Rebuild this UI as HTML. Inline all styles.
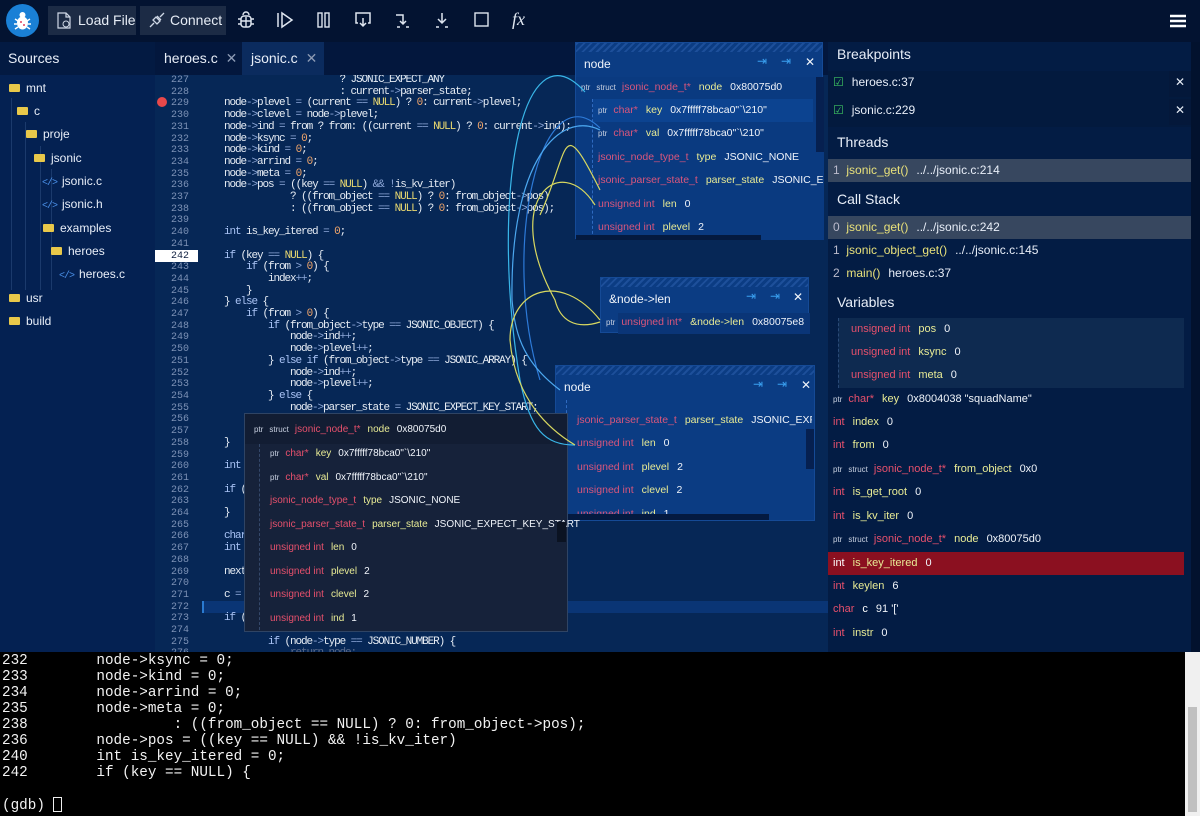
<!DOCTYPE html>
<html><head><meta charset="utf-8"><style>
*{margin:0;padding:0;box-sizing:border-box}
body{width:1200px;height:816px;overflow:hidden;background:#062452;font-family:"Liberation Sans",sans-serif;color:#e8eef8;position:relative}
.abs{position:absolute}
#top{left:0;top:0;width:1200px;height:42px;background:#031331}
.btn{position:absolute;top:6px;height:29px;background:#1c2b45;color:#e6ecf5;font-size:14px;line-height:29px;padding-left:30px}
.ic{position:absolute;top:10px}
#side{left:0;top:42px;width:155px;height:610px;background:#042152}
#side .hd{height:33px;background:#031a42;font-size:14px;line-height:33px;padding-left:8px}
.tr{position:absolute;font-size:12px;color:#e8eef8;height:16px;line-height:16px}
.fold{display:inline-block;width:11px;height:8px;background:#e8c84a;border-radius:1px;margin-right:6px;vertical-align:-0px}
.xml{color:#4a90e8;font-size:10px;margin-right:5px;font-family:"Liberation Mono",monospace;letter-spacing:-1px}
.vl{position:absolute;width:1px;background:#1b3a6c}
#tabs{left:155px;top:42px;width:673px;height:33px;background:#03173d}
.tab{position:absolute;top:0;height:33px;line-height:33px;font-size:14px;padding-left:9px}
#code{left:155px;top:75px;width:673px;height:577px;background:#062756;overflow:hidden}
.ln{position:absolute;left:0;width:34px;text-align:right;font:10px/11.7px "Liberation Mono",monospace;color:#7d92b6}
pre{position:absolute;left:47px;top:0;font:11px/11.7px "Liberation Mono",monospace;letter-spacing:-1.1px;color:#e6ecf4}
.o{color:#8da7d8}.nm{color:#f2a66a}.nu{color:#e8d870}.k{color:#a9c3f5}
#right{left:828px;top:42px;width:372px;height:610px;background:#031c44}
.h{position:absolute;left:9px;font-size:14px;color:#e8eef8}
.row{position:absolute;left:0;width:363px;height:23px;line-height:23px;font-size:11px;padding-left:5px;white-space:nowrap}
.p{font-size:8px;color:#c8d0e0;margin-right:6px}
.s{font-size:8px;color:#c8d0e0;margin-right:6px}
.t{color:#e6506c;margin-right:8px}
.n{color:#e8eb95;margin-right:8px}
.v{color:#f0f4fa}
.fn{color:#e8e07a;margin-right:8px}
#term{left:0;top:652px;width:1200px;height:164px;background:#000}
#term pre{left:2px;top:1px;font:14.3px/16px "Liberation Mono",monospace;letter-spacing:0px;color:#f2f2f2}
.pop{position:absolute;background:#0b3c83;border:1px solid #154a96}
.hatch{position:absolute;left:0;top:0;right:0;height:9px;background:repeating-linear-gradient(135deg,#1d4f9a 0 2px,#0b3c83 2px 5px)}
.pt{position:absolute;left:8px;font-size:12px;color:#f0f4fa}
.pb{position:absolute;font-size:12px;color:#3aa0f0}
.pop .row{font-size:10.5px}
.pop .t{color:#d9567c}
#tip{left:244px;top:413px;width:324px;height:219px;background:#16223a;border:1px solid #2f4464}
#tip .row{font-size:10px}
#tip .t,#tip .n{margin-right:7px}
</style></head><body>

<div id="top" class="abs">
  <div class="abs" style="left:6px;top:4px;width:33px;height:33px;border-radius:50%;background:#1a80d6"></div>
  <svg class="abs" style="left:13px;top:10px" width="19" height="21" viewBox="0 0 19 21"><ellipse cx="9.5" cy="13" rx="5.5" ry="6.5" fill="#fff"/><circle cx="9.5" cy="5" r="3" fill="#fff"/><path d="M2 9l3 2M17 9l-3 2M1 14h3M18 14h-3M2 19l3-2M17 19l-3-2" stroke="#fff" stroke-width="1.4"/><circle cx="8" cy="12" r="1" fill="#e04060"/><circle cx="11" cy="15" r="1" fill="#e04060"/></svg>
  <div class="btn" style="left:48px;width:88px">Load File</div>
  <svg class="abs" style="left:57px;top:12px" width="14" height="17" viewBox="0 0 14 17"><path d="M1 1h8l4 4v11H1z M9 1v4h4" fill="none" stroke="#cfd8e6" stroke-width="1.2"/><circle cx="9" cy="12" r="3" fill="#1c2b45" stroke="#cfd8e6"/></svg>
  <div class="btn" style="left:140px;width:86px">Connect</div>
  <svg class="abs" style="left:148px;top:11px" width="18" height="18" viewBox="0 0 18 18"><path d="M2 16l4-4M16 2l-4 4M5 9l4 4 3-3-4-4zM9 5l4 4" fill="none" stroke="#cfd8e6" stroke-width="1.3"/></svg>
  <svg class="ic" style="left:237px" width="18" height="20" viewBox="0 0 18 20"><rect x="4" y="6" width="10" height="11" rx="3" fill="none" stroke="#dfe6f0" stroke-width="1.5"/><path d="M6 5a3 3 0 0 1 6 0M1 9h3M14 9h3M1 14h3M14 14h3M9 7v10M4 11h10" stroke="#dfe6f0" stroke-width="1.4" fill="none"/></svg>
  <svg class="ic" style="left:276px" width="18" height="20" viewBox="0 0 18 20"><path d="M2 3v14M6 3l10 7-10 7z" fill="none" stroke="#dfe6f0" stroke-width="1.5"/></svg>
  <svg class="ic" style="left:316px" width="16" height="20" viewBox="0 0 16 20"><rect x="2" y="3" width="4" height="14" fill="none" stroke="#dfe6f0" stroke-width="1.4"/><rect x="9" y="3" width="4" height="14" fill="none" stroke="#dfe6f0" stroke-width="1.4"/></svg>
  <svg class="ic" style="left:354px" width="18" height="20" viewBox="0 0 18 20"><path d="M4 13H2V3h14v10h-2M9 8v8M6 13l3 3 3-3" fill="none" stroke="#dfe6f0" stroke-width="1.5"/></svg>
  <svg class="ic" style="left:394px" width="18" height="20" viewBox="0 0 18 20"><path d="M2 5h7v9M6 11l3 3 3-3M3 17h3M12 17h3" fill="none" stroke="#dfe6f0" stroke-width="1.5"/></svg>
  <svg class="ic" style="left:433px" width="18" height="20" viewBox="0 0 18 20"><path d="M9 3v10M5 9l4 4 4-4M3 17h3M12 17h3" fill="none" stroke="#dfe6f0" stroke-width="1.5"/></svg>
  <svg class="ic" style="left:473px" width="18" height="20" viewBox="0 0 18 20"><rect x="2" y="3" width="13" height="13" fill="none" stroke="#dfe6f0" stroke-width="1.4"/></svg>
  <div class="abs" style="left:512px;top:9px;font:italic 18px 'Liberation Serif',serif;color:#dfe6f0">fx</div>
  <svg class="abs" style="left:1170px;top:14px" width="16" height="14" viewBox="0 0 16 14"><path d="M0 2h16M0 7h16M0 12h16" stroke="#fff" stroke-width="2.4"/></svg>
</div>

<div id="side" class="abs">
  <div class="hd">Sources</div>
  <div class="vl" style="left:11px;top:56px;height:192px"></div>
  <div class="vl" style="left:25px;top:80px;height:168px"></div>
  <div class="vl" style="left:40px;top:104px;height:144px"></div>
  <div class="vl" style="left:51px;top:127px;height:121px"></div>
</div>
<div class="tr" style="left:9px;top:80px"><span class="fold"></span>mnt</div>
<div class="tr" style="left:17px;top:103px"><span class="fold"></span>c</div>
<div class="tr" style="left:26px;top:126px"><span class="fold"></span>proje</div>
<div class="tr" style="left:34px;top:150px"><span class="fold"></span>jsonic</div>
<div class="tr" style="left:42px;top:173px"><span class="xml">&lt;/&gt;</span>jsonic.c</div>
<div class="tr" style="left:42px;top:196px"><span class="xml">&lt;/&gt;</span>jsonic.h</div>
<div class="tr" style="left:43px;top:220px"><span class="fold"></span>examples</div>
<div class="tr" style="left:51px;top:243px"><span class="fold"></span>heroes</div>
<div class="tr" style="left:59px;top:266px"><span class="xml">&lt;/&gt;</span>heroes.c</div>
<div class="tr" style="left:9px;top:290px"><span class="fold"></span>usr</div>
<div class="tr" style="left:9px;top:313px"><span class="fold"></span>build</div>

<div id="tabs" class="abs">
  <div class="tab" style="left:0;width:86px">heroes.c <span style="color:#8c9ab4;margin-left:4px">✕</span></div>
  <div class="tab" style="left:87px;width:82px;background:#0b2b5e">jsonic.c <span style="color:#8c9ab4;margin-left:4px">✕</span></div>
</div>

<div id="code" class="abs">
  <div class="abs" style="left:47px;top:526px;width:626px;height:12px;background:#0a3575"></div>
  <div class="abs" style="left:47px;top:526px;width:2px;height:12px;background:#2a7ad0"></div>
  <div class="abs" style="left:2px;top:22px;width:10px;height:10px;border-radius:50%;background:#e8484a"></div>
  <div class="abs" style="left:0;top:175px;width:43px;height:12px;background:#fff"></div>
  <div class="ln" style="top:0">227<br>228<br>229<br>230<br>231<br>232<br>233<br>234<br>235<br>236<br>237<br>238<br>239<br>240<br>241<br><span style="color:#102040">242</span><br>243<br>244<br>245<br>246<br>247<br>248<br>249<br>250<br>251<br>252<br>253<br>254<br>255<br>256<br>257<br>258<br>259<br>260<br>261<br>262<br>263<br>264<br>265<br>266<br>267<br>268<br>269<br>270<br>271<br>272<br>273<br>274<br>275<br>276</div>
<pre style="top:0">                         ? JSONIC_EXPECT_ANY
                         : current<span class="o">-&gt;</span>parser_state;
    node<span class="o">-&gt;</span>plevel <span class="o">=</span> (current <span class="o">==</span> <span class="nu">NULL</span>) ? <span class="nm">0</span>: current<span class="o">-&gt;</span>plevel;
    node<span class="o">-&gt;</span>clevel <span class="o">=</span> node<span class="o">-&gt;</span>plevel;
    node<span class="o">-&gt;</span>ind <span class="o">=</span> from ? from: ((current <span class="o">==</span> <span class="nu">NULL</span>) ? <span class="nm">0</span>: current<span class="o">-&gt;</span>ind);
    node<span class="o">-&gt;</span>ksync <span class="o">=</span> <span class="nm">0</span>;
    node<span class="o">-&gt;</span>kind <span class="o">=</span> <span class="nm">0</span>;
    node<span class="o">-&gt;</span>arrind <span class="o">=</span> <span class="nm">0</span>;
    node<span class="o">-&gt;</span>meta <span class="o">=</span> <span class="nm">0</span>;
    node<span class="o">-&gt;</span>pos <span class="o">=</span> ((key <span class="o">==</span> <span class="nu">NULL</span>) <span class="o">&amp;&amp;</span> <span class="o">!</span>is_kv_iter)
                ? ((from_object <span class="o">==</span> <span class="nu">NULL</span>) ? <span class="nm">0</span>: from_object<span class="o">-&gt;</span>pos)
                : ((from_object <span class="o">==</span> <span class="nu">NULL</span>) ? <span class="nm">0</span>: from_object<span class="o">-&gt;</span>pos);

    <span class="k">int</span> is_key_itered <span class="o">=</span> <span class="nm">0</span>;

    <span class="k">if</span> (key <span class="o">==</span> <span class="nu">NULL</span>) {
        <span class="k">if</span> (from <span class="o">&gt;</span> <span class="nm">0</span>) {
            index<span class="o">++</span>;
        }
    } <span class="k">else</span> {
        <span class="k">if</span> (from <span class="o">&gt;</span> <span class="nm">0</span>) {
            <span class="k">if</span> (from_object<span class="o">-&gt;</span>type <span class="o">==</span> JSONIC_OBJECT) {
                node<span class="o">-&gt;</span>ind<span class="o">++</span>;
                node<span class="o">-&gt;</span>plevel<span class="o">++</span>;
            } <span class="k">else if</span> (from_object<span class="o">-&gt;</span>type <span class="o">==</span> JSONIC_ARRAY) {
                node<span class="o">-&gt;</span>ind<span class="o">++</span>;
                node<span class="o">-&gt;</span>plevel<span class="o">++</span>;
            } <span class="k">else</span> {
                node<span class="o">-&gt;</span>parser_state <span class="o">=</span> JSONIC_EXPECT_KEY_START;


    }

    <span class="k">int</span>

    <span class="k">if</span> (

    }

    <span class="k">char</span>
    <span class="k">int</span>

    next

    c <span class="o">=</span>

    <span class="k">if</span> (

            <span class="k">if</span> (node<span class="o">-&gt;</span>type <span class="o">==</span> JSONIC_NUMBER) {
                <span style="color:#5a6a8a">return node;</span></pre>
</div>

<div id="right" class="abs">
  <div class="h" style="top:4px">Breakpoints</div>
  <div class="abs" style="left:0;top:29px;width:363px;height:56px;background:#031a3e"></div>
  <div class="abs" style="left:341px;top:29px;width:22px;height:26px;background:#04183a"></div>
  <div class="abs" style="left:341px;top:57px;width:22px;height:26px;background:#04183a"></div>
  <div class="row" style="top:29px;font-size:12px"><span style="color:#3cc060;margin-right:8px">☑</span>heroes.c:37<span style="position:absolute;left:347px;color:#e6ecf5">✕</span></div>
  <div class="row" style="top:57px;font-size:12px"><span style="color:#3cc060;margin-right:8px">☑</span>jsonic.c:229<span style="position:absolute;left:347px;color:#e6ecf5">✕</span></div>
  <div class="h" style="top:92px">Threads</div>
  <div class="row" style="top:117px;background:#37475f;font-size:12px"><span style="color:#bbc">1</span>&nbsp; <span class="fn">jsonic_get()</span>../../jsonic.c:214</div>
  <div class="h" style="top:149px">Call Stack</div>
  <div class="row" style="top:174px;background:#37475f;font-size:12px"><span style="color:#bbc">0</span>&nbsp; <span class="fn">jsonic_get()</span>../../jsonic.c:242</div>
  <div class="row" style="top:197px;font-size:12px"><span style="color:#bbc">1</span>&nbsp; <span class="fn">jsonic_object_get()</span>../../jsonic.c:145</div>
  <div class="row" style="top:220px;font-size:12px"><span style="color:#bbc">2</span>&nbsp; <span class="fn">main()</span>heroes.c:37</div>
  <div class="h" style="top:252px">Variables</div>
  <div class="abs" style="left:10px;top:276px;width:346px;height:70px;background:#0e2a50;border-left:1px dashed #2a4a78"></div>
  <div class="row" style="top:276px;left:18px;width:330px"><span class="t">unsigned int</span><span class="n">pos</span><span class="v">0</span></div>
  <div class="row" style="top:299px;left:18px;width:330px"><span class="t">unsigned int</span><span class="n">ksync</span><span class="v">0</span></div>
  <div class="row" style="top:322px;left:18px;width:330px"><span class="t">unsigned int</span><span class="n">meta</span><span class="v">0</span></div>
  <div class="row" style="top:346px"><span class="p">ptr</span><span class="t">char*</span><span class="n">key</span><span class="v">0x8004038 "squadName"</span></div>
  <div class="row" style="top:369px"><span class="t">int</span><span class="n">index</span><span class="v">0</span></div>
  <div class="row" style="top:392px"><span class="t">int</span><span class="n">from</span><span class="v">0</span></div>
  <div class="row" style="top:416px"><span class="p">ptr</span><span class="s">struct</span><span class="t">jsonic_node_t*</span><span class="n">from_object</span><span class="v">0x0</span></div>
  <div class="row" style="top:439px"><span class="t">int</span><span class="n">is_get_root</span><span class="v">0</span></div>
  <div class="row" style="top:463px"><span class="t">int</span><span class="n">is_kv_iter</span><span class="v">0</span></div>
  <div class="row" style="top:486px"><span class="p">ptr</span><span class="s">struct</span><span class="t">jsonic_node_t*</span><span class="n">node</span><span class="v">0x80075d0</span></div>
  <div class="row" style="top:510px;background:#8b1020;width:356px"><span class="t" style="color:#fff">int</span><span class="n">is_key_itered</span><span class="v">0</span></div>
  <div class="row" style="top:533px"><span class="t">int</span><span class="n">keylen</span><span class="v">6</span></div>
  <div class="row" style="top:556px"><span class="t">char</span><span class="n" style="color:#fff">c</span><span class="v">91 '['</span></div>
  <div class="row" style="top:580px"><span class="t">int</span><span class="n">instr</span><span class="v">0</span></div>
  <div class="abs" style="left:363px;top:0;width:9px;height:610px;background:#02122e"></div>
</div>

<!-- popup 1 -->
<div class="pop" style="left:575px;top:42px;width:248px;height:197px">
  <div class="hatch"></div>
  <div class="pt" style="top:14px">node</div>
  <div class="pb" style="left:181px;top:11px">⇥</div><div class="pb" style="left:205px;top:11px">⇥</div><div class="pt" style="left:229px;top:12px">✕</div>
  <div class="abs" style="left:0;top:34px;width:248px;height:163px;background:#0a3a80"></div>
  <div class="abs" style="left:16px;top:56px;width:1px;height:140px;border-left:1px dashed #2f6ac0"></div>
  <div class="row" style="top:33px;left:0;width:240px"><span class="p">ptr</span><span class="s">struct</span><span class="t">jsonic_node_t*</span><span class="n">node</span><span class="v">0x80075d0</span></div>
  <div class="row" style="top:56px;left:17px;width:220px;background:#0c4390"><span class="p">ptr</span><span class="t">char*</span><span class="n">key</span><span class="v">0x7fffff78bca0"`\210"</span></div>
  <div class="row" style="top:79px;left:17px;width:220px"><span class="p">ptr</span><span class="t">char*</span><span class="n">val</span><span class="v">0x7fffff78bca0"`\210"</span></div>
  <div class="row" style="top:103px;left:17px;width:230px;overflow:hidden"><span class="t">jsonic_node_type_t</span><span class="n">type</span><span class="v">JSONIC_NONE</span></div>
  <div class="row" style="top:126px;left:17px;width:230px;overflow:hidden"><span class="t">jsonic_parser_state_t</span><span class="n">parser_state</span><span class="v">JSONIC_EXPE</span></div>
  <div class="row" style="top:150px;left:17px;width:220px"><span class="t">unsigned int</span><span class="n">len</span><span class="v">0</span></div>
  <div class="row" style="top:173px;left:17px;width:220px"><span class="t">unsigned int</span><span class="n">plevel</span><span class="v">2</span></div>
  <div class="abs" style="left:240px;top:34px;width:8px;height:75px;background:#062050"></div>
  <div class="abs" style="left:0;top:192px;width:185px;height:5px;background:#041a40"></div>
</div>

<!-- popup 2 -->
<div class="pop" style="left:600px;top:277px;width:209px;height:56px">
  <div class="hatch"></div>
  <div class="pt" style="top:14px">&amp;node-&gt;len</div>
  <div class="pb" style="left:145px;top:11px">⇥</div><div class="pb" style="left:169px;top:11px">⇥</div><div class="pt" style="left:192px;top:12px">✕</div>
  <div class="abs" style="left:17px;top:35px;width:192px;height:21px;background:#0a3577"></div>
  <div class="row" style="top:33px;left:0;width:205px"><span class="p">ptr</span><span class="t">unsigned int*</span><span class="n">&amp;node-&gt;len</span><span class="v">0x80075e8</span></div>
</div>

<!-- popup 3 -->
<div class="pop" style="left:555px;top:365px;width:260px;height:156px;overflow:hidden">
  <div class="hatch"></div>
  <div class="abs" style="left:0;top:9px;width:260px;height:22px;background:#0b3c83"></div>
  <div class="pt" style="top:14px">node</div>
  <div class="pb" style="left:197px;top:11px">⇥</div><div class="pb" style="left:221px;top:11px">⇥</div><div class="pt" style="left:245px;top:12px">✕</div>
  <div class="abs" style="left:10px;top:34px;width:1px;height:120px;border-left:1px dashed #2f6ac0"></div>
  <div class="row" style="top:43px;left:16px;width:240px;overflow:hidden"><span class="t">jsonic_parser_state_t</span><span class="n">parser_state</span><span class="v">JSONIC_EXPECT_I</span></div>
  <div class="row" style="top:66px;left:16px;width:240px"><span class="t">unsigned int</span><span class="n">len</span><span class="v">0</span></div>
  <div class="row" style="top:90px;left:16px;width:240px"><span class="t">unsigned int</span><span class="n">plevel</span><span class="v">2</span></div>
  <div class="row" style="top:113px;left:16px;width:240px"><span class="t">unsigned int</span><span class="n">clevel</span><span class="v">2</span></div>
  <div class="row" style="top:137px;left:16px;width:240px"><span class="t">unsigned int</span><span class="n">ind</span><span class="v">1</span></div>
  <div class="abs" style="left:250px;top:63px;width:9px;height:40px;background:#062050"></div>
  <div class="abs" style="left:0;top:148px;width:213px;height:8px;background:#041a40"></div>
</div>

<!-- dark tooltip -->
<div id="tip" class="abs">
  <div class="abs" style="left:0;top:0;width:322px;height:30px;background:#121d33"></div>
  <div class="row" style="top:4px;left:4px;width:310px"><span class="p">ptr</span><span class="s">struct</span><span class="t">jsonic_node_t*</span><span class="n">node</span><span class="v">0x80075d0</span></div>
  <div class="abs" style="left:14px;top:30px;width:1px;height:186px;border-left:1px dashed #34486a"></div>
  <div class="row" style="top:28px;left:20px;width:290px"><span class="p">ptr</span><span class="t">char*</span><span class="n">key</span><span class="v">0x7fffff78bca0"`\210"</span></div>
  <div class="row" style="top:52px;left:20px;width:290px"><span class="p">ptr</span><span class="t">char*</span><span class="n">val</span><span class="v">0x7fffff78bca0"`\210"</span></div>
  <div class="row" style="top:75px;left:20px;width:290px"><span class="t">jsonic_node_type_t</span><span class="n">type</span><span class="v">JSONIC_NONE</span></div>
  <div class="row" style="top:99px;left:20px;width:300px"><span class="t">jsonic_parser_state_t</span><span class="n">parser_state</span><span class="v">JSONIC_EXPECT_KEY_START</span></div>
  <div class="row" style="top:122px;left:20px;width:290px"><span class="t">unsigned int</span><span class="n">len</span><span class="v">0</span></div>
  <div class="row" style="top:146px;left:20px;width:290px"><span class="t">unsigned int</span><span class="n">plevel</span><span class="v">2</span></div>
  <div class="row" style="top:169px;left:20px;width:290px"><span class="t">unsigned int</span><span class="n">clevel</span><span class="v">2</span></div>
  <div class="row" style="top:193px;left:20px;width:290px"><span class="t">unsigned int</span><span class="n">ind</span><span class="v">1</span></div>
  <div class="abs" style="left:312px;top:108px;width:9px;height:20px;background:#0b1322"></div>
</div>

<svg class="abs" style="left:0;top:0" width="1200" height="816">
  <g fill="none" stroke-width="1.2">
    <path d="M585 92 C520 20 490 200 520 380 C530 430 545 445 575 445" stroke="#39b6e8"/>
    <path d="M600 128 C540 70 500 250 540 380" stroke="#2d7ad8"/>
    <path d="M600 130 C560 110 510 160 512 300 C515 330 520 360 560 390" stroke="#4ca8f0"/>
    <path d="M595 205 C560 150 500 200 555 300 C560 320 575 330 600 322" stroke="#d8d860"/>
    <path d="M600 320 C560 270 510 290 510 340 C515 400 550 430 575 445" stroke="#d8d860"/>
    <path d="M540 215 C570 150 560 110 600 190" stroke="#d8d860"/>
  </g>
</svg>

<div id="term" class="abs">
<pre>232        node-&gt;ksync = 0;
233        node-&gt;kind = 0;
234        node-&gt;arrind = 0;
235        node-&gt;meta = 0;
238                 : ((from_object == NULL) ? 0: from_object-&gt;pos);
236        node-&gt;pos = ((key == NULL) &amp;&amp; !is_kv_iter)
240        int is_key_itered = 0;
242        if (key == NULL) {

(gdb) <span style="display:inline-block;width:9px;height:15px;border:1px solid #eee;vertical-align:-3px"></span></pre>
  <div class="abs" style="left:1185px;top:0;width:15px;height:164px;background:#f0f0f0"></div>
  <div class="abs" style="left:1188px;top:55px;width:9px;height:105px;background:#c0c0c0"></div>
</div>
</body></html>
